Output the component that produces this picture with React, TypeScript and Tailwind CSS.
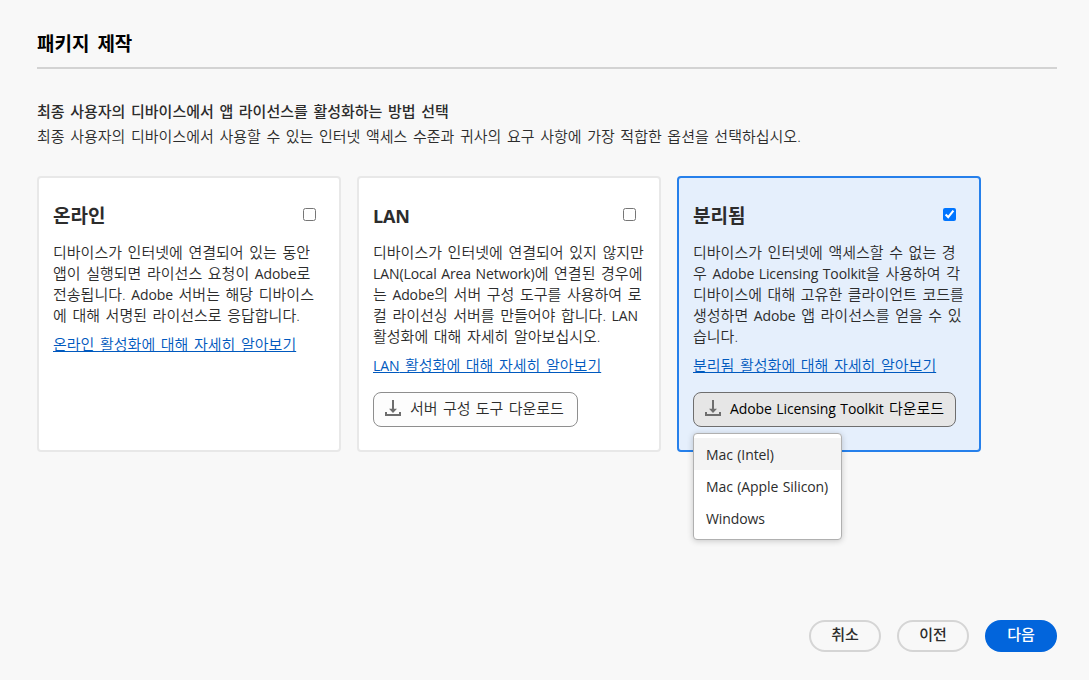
import React, {useState} from "react";
import clsx from "clsx";

interface TextProps {
  children: string;
}

// Latin words are set slightly smaller than the Hangul inside the same line
const Text = ({children}: TextProps) => (
  <>
    {children.split(/([A-Za-z(][A-Za-z() ]*[A-Za-z)])/).map((part, i) => (
      i % 2 === 1
        ? <span key={i} className="text-[14px] leading-none font-normal tracking-[-0.1px] [word-spacing:1px]">{part}</span>
        : part
    ))}
  </>
);

interface Option {
  id: string;
  title: string;
  lines: string[];
  link: string;
  download?: string;
  buttonWidth?: string;
}

const options: Option[] = [
  {
    id: "online",
    title: "온라인",
    lines: [
      "디바이스가 인터넷에 연결되어 있는 동안",
      "앱이 실행되면 라이선스 요청이 Adobe로",
      "전송됩니다. Adobe 서버는 해당 디바이스",
      "에 대해 서명된 라이선스로 응답합니다.",
    ],
    link: "온라인 활성화에 대해 자세히 알아보기",
  },
  {
    id: "lan",
    title: "LAN",
    lines: [
      "디바이스가 인터넷에 연결되어 있지 않지만",
      "LAN(Local Area Network)에 연결된 경우에",
      "는 Adobe의 서버 구성 도구를 사용하여 로",
      "컬 라이선싱 서버를 만들어야 합니다. LAN",
      "활성화에 대해 자세히 알아보십시오.",
    ],
    link: "LAN 활성화에 대해 자세히 알아보기",
    download: "서버 구성 도구 다운로드",
    buttonWidth: "w-[205px]",
  },
  {
    id: "isolated",
    title: "분리됨",
    lines: [
      "디바이스가 인터넷에 액세스할 수 없는 경",
      "우 Adobe Licensing Toolkit을 사용하여 각",
      "디바이스에 대해 고유한 클라이언트 코드를",
      "생성하면 Adobe 앱 라이선스를 얻을 수 있",
      "습니다.",
    ],
    link: "분리됨 활성화에 대해 자세히 알아보기",
    download: "Adobe Licensing Toolkit 다운로드",
    buttonWidth: "w-[263px]",
  },
];

const platforms = ["Mac (Intel)", "Mac (Apple Silicon)", "Windows"];

const DownloadIcon = () => (
  <svg width="16" height="16" viewBox="0 0 16 16" fill="#6e6e6e" className="mb-[3px] shrink-0">
    <path d="M7 0h2v8.8h3L8 13 4 8.8h3z"/>
    <path d="M0 12h2v2h12v-2h2v4H0z"/>
  </svg>
);

const PlatformMenu = () => (
  <ul className="absolute left-0 top-[41px] z-10 w-[149px] h-[107px] py-1 rounded border border-[#b0b0b0] bg-white shadow-[0_1px_6px_rgba(0,0,0,0.2)]">
    {platforms.map((name, i) => (
      <li key={name} className={clsx("flex h-8 items-center px-3 pt-0.5 whitespace-nowrap text-[#2c2c2c]", i === 0 && "bg-[#f4f4f4]")}>
        <Text>{name}</Text>
      </li>
    ))}
  </ul>
);

interface CardProps {
  option: Option;
  checked: boolean;
  onSelect: () => void;
}

const OptionCard = ({option, checked, onSelect}: CardProps) => (
  <section className={clsx("w-[304px] h-[276px] rounded border-2 px-3.5", checked ? "border-[#2680eb] bg-[#e5effc]" : "border-[#e8e8e8] bg-white")}>
    <div className="flex items-center justify-between pt-[23px] pr-[9px]">
      <h2 className={clsx("h-7 leading-[30px] font-bold", option.id === "lan" ? "text-[18px] tracking-[-0.2px]" : "text-[19px]")}>{option.title}</h2>
      <input type="checkbox" checked={checked} onChange={onSelect} className="size-[13px] mb-[2px]"/>
    </div>
    <div className="pt-[13px] leading-[21px] whitespace-nowrap">
      {option.lines.map((line) => <p key={line} className="h-[21px]"><Text>{line}</Text></p>)}
    </div>
    <a href="#" className="mt-2 block h-[21px] leading-[21px] whitespace-nowrap text-[#0059be] underline decoration-1 underline-offset-1 [text-decoration-skip-ink:none]"><Text>{option.link}</Text></a>
    {option.download && (
      <div className="relative mt-4">
        <button
          className={clsx("flex h-[35px] items-center gap-[9px] rounded-lg border pl-[11px] [word-spacing:1.4px] whitespace-nowrap", option.buttonWidth, checked ? "border-[#6e6e6e] bg-[#e6e6e6] text-black" : "border-[#8e8e8e] bg-[#fdfdfd]")}
        >
          <DownloadIcon/>
          <span className="pb-0.5"><Text>{option.download}</Text></span>
        </button>
        {checked && <PlatformMenu/>}
      </div>
    )}
  </section>
);

const App = () => {
  const [selected, setSelected] = useState("isolated");

  return (
    <main className="flex h-[680px] w-[1089px] flex-col bg-[#f8f8f8] pl-[37px] pr-8 text-[15px] font-[350] [word-spacing:1.7px] text-[#2c2c2c] font-['Open_Sans','Noto_Sans_CJK_KR',sans-serif]">
      <header className="h-[69px] border-b-2 border-[#d3d3d3] pt-[30px]">
        <h1 className="text-[19px] leading-7 font-bold [word-spacing:3px] text-black">패키지 제작</h1>
      </header>

      <div className="pt-[30px] leading-[25px] whitespace-nowrap">
        <p className="h-[25px] font-medium">최종 사용자의 디바이스에서 앱 라이선스를 활성화하는 방법 선택</p>
        <p className="h-[25px]">최종 사용자의 디바이스에서 사용할 수 있는 인터넷 액세스 수준과 귀사의 요구 사항에 가장 적합한 옵션을 선택하십시오.</p>
      </div>

      <div className="flex gap-4 pt-[27px]">
        {options.map((option) => (
          <OptionCard
            key={option.id}
            option={option}
            checked={selected === option.id}
            onSelect={() => setSelected(option.id)}
          />
        ))}
      </div>

      <footer className="mt-auto mb-7 flex justify-end gap-4 font-medium">
        <button className="h-8 w-[72px] rounded-full border-2 border-[#d5d5d5] pb-1 leading-6">취소</button>
        <button className="h-8 w-[72px] rounded-full border-2 border-[#d5d5d5] pb-1 leading-6">이전</button>
        <button className="h-8 w-[72px] rounded-full bg-[#0265dc] pb-1 leading-6 text-white">다음</button>
      </footer>
    </main>
  );
};

export default App;
